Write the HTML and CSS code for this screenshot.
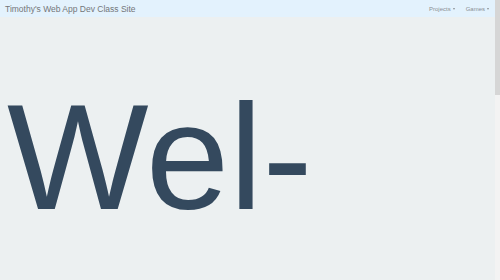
FILE: index.html
```html
<!DOCTYPE html>
<html lang="en">
<head>
<meta charset="utf-8">
<title>Timothy's Web App Dev Class Site</title>
<link rel="stylesheet" href="styles.css">
</head>
<body>
<nav class="navbar">
  <a class="brand" href="#">Timothy's Web App Dev Class Site</a>
  <ul class="menu">
    <li class="menu-item">Projects <span class="caret"></span></li>
    <li class="menu-item">Games <span class="caret"></span></li>
  </ul>
</nav>
<main class="content">
  <h1 class="welcome">Wel-<br>come</h1>
  <p class="filler"></p>
</main>
<div class="scrollbar"><div class="scroll-thumb"></div></div>
</body>
</html>
```
FILE: styles.css
```css
html {
  background: #ecf0f1;
}
html::-webkit-scrollbar {
  display: none;
}
body {
  margin: 0 5px 0 0;
  font-family: "Liberation Sans", Arial, sans-serif;
  color: #34495e;
  background: #ecf0f1;
}
.navbar {
  height: 17px;
  background: #e3f2fd;
  display: flex;
  align-items: center;
  justify-content: space-between;
  padding: 0 6px 0 5px;
}
.brand {
  font-size: 8.5px;
  color: #737679;
  text-decoration: none;
}
.menu {
  list-style: none;
  margin: 0;
  padding: 0;
  display: flex;
  gap: 11px;
}
.menu-item {
  font-size: 6px;
  color: #8a8f93;
  display: flex;
  align-items: center;
  gap: 2px;
}
.caret {
  width: 0;
  height: 0;
  border-left: 1.5px solid transparent;
  border-right: 1.5px solid transparent;
  border-top: 2px solid #8a8f93;
}
.content {
  padding: 0 0 0 7px;
}
.welcome {
  margin: 54px 0 0 0;
  font-size: 150px;
  font-weight: normal;
  line-height: 1.15;
  letter-spacing: 0;
}
.filler {
  margin: 0;
  height: 240px;
}
.scrollbar {
  position: fixed;
  top: 0;
  right: 0;
  width: 5px;
  height: 100%;
  background: #f3f3f3;
}
.scroll-thumb {
  height: 95px;
  background: #d6d6d6;
}
```
